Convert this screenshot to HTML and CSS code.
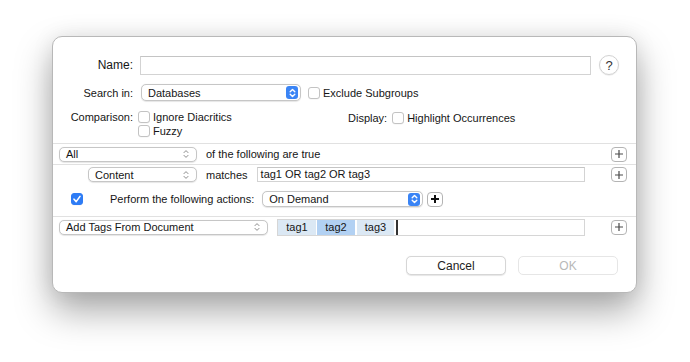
FILE: index.html
```html
<!DOCTYPE html>
<html>
<head>
<meta charset="utf-8">
<link rel="stylesheet" href="styles.css">
</head>
<body>
<div class="page">
  <div class="dialog">
    <div class="top">
      <div class="row row-name">
        <div class="label label-name">Name:</div>
        <div class="field field-name"></div>
        <div class="help">?</div>
      </div>
      <div class="row row-search">
        <div class="label">Search in:</div>
        <div class="popup popup-search"><span>Databases</span>
          <span class="blue-step"><svg width="7" height="10" viewBox="0 0 7 10"><polyline points="1.2,3.8 3.5,1.5 5.8,3.8" fill="none" stroke="#fff" stroke-width="1.4" stroke-linecap="round" stroke-linejoin="round"/><polyline points="1.2,6.2 3.5,8.5 5.8,6.2" fill="none" stroke="#fff" stroke-width="1.4" stroke-linecap="round" stroke-linejoin="round"/></svg></span>
        </div>
        <div class="check"></div>
        <div class="check-text">Exclude Subgroups</div>
      </div>
      <div class="row row-comp">
        <div class="label label-comp">Comparison:</div>
        <div class="comp-opts">
          <div class="opt"><div class="check"></div><span class="check-text">Ignore Diacritics</span></div>
          <div class="opt"><div class="check"></div><span class="check-text">Fuzzy</span></div>
        </div>
        <div class="display">
          <span class="display-label">Display:</span>
          <div class="check"></div>
          <span class="check-text">Highlight Occurrences</span>
        </div>
      </div>
    </div>
    <div class="divider"></div>
    <div class="rule rule-all">
      <div class="popup popup-all"><span>All</span>
        <svg class="step" width="6" height="10" viewBox="0 0 6 10"><polyline points="1,3.6 3,1.6 5,3.6" fill="none" stroke="#8a8a8a" stroke-width="1" stroke-linecap="round" stroke-linejoin="round"/><polyline points="1,6.4 3,8.4 5,6.4" fill="none" stroke="#8a8a8a" stroke-width="1" stroke-linecap="round" stroke-linejoin="round"/></svg>
      </div>
      <div class="rule-text">of the following are true</div>
      <div class="plus"><svg width="10" height="10" viewBox="0 0 10 10"><path d="M5 1V9M1 5H9" stroke="#4a4a4a" stroke-width="1.2"/></svg></div>
    </div>
    <div class="divider"></div>
    <div class="block">
      <div class="rule rule-content">
        <div class="popup popup-content"><span>Content</span>
          <svg class="step" width="6" height="10" viewBox="0 0 6 10"><polyline points="1,3.6 3,1.6 5,3.6" fill="none" stroke="#8a8a8a" stroke-width="1" stroke-linecap="round" stroke-linejoin="round"/><polyline points="1,6.4 3,8.4 5,6.4" fill="none" stroke="#8a8a8a" stroke-width="1" stroke-linecap="round" stroke-linejoin="round"/></svg>
        </div>
        <div class="rule-text">matches</div>
        <div class="field field-match">tag1 OR tag2 OR tag3</div>
        <div class="plus"><svg width="10" height="10" viewBox="0 0 10 10"><path d="M5 1V9M1 5H9" stroke="#4a4a4a" stroke-width="1.2"/></svg></div>
      </div>
      <div class="row row-perform">
        <div class="check checked"><svg width="10" height="10" viewBox="0 0 10 10"><polyline points="2,5.2 4.2,7.6 8,2.4" fill="none" stroke="#fff" stroke-width="1.6" stroke-linecap="round" stroke-linejoin="round"/></svg></div>
        <div class="perform-text">Perform the following actions:</div>
        <div class="popup popup-demand"><span>On Demand</span>
          <span class="blue-step"><svg width="7" height="10" viewBox="0 0 7 10"><polyline points="1.2,3.8 3.5,1.5 5.8,3.8" fill="none" stroke="#fff" stroke-width="1.4" stroke-linecap="round" stroke-linejoin="round"/><polyline points="1.2,6.2 3.5,8.5 5.8,6.2" fill="none" stroke="#fff" stroke-width="1.4" stroke-linecap="round" stroke-linejoin="round"/></svg></span>
        </div>
        <div class="plus plus-bold"><svg width="10" height="10" viewBox="0 0 10 10"><path d="M5 1V9M1 5H9" stroke="#111" stroke-width="2"/></svg></div>
      </div>
    </div>
    <div class="divider"></div>
    <div class="rule rule-tags">
      <div class="popup popup-tags"><span>Add Tags From Document</span>
        <svg class="step" width="6" height="10" viewBox="0 0 6 10"><polyline points="1,3.6 3,1.6 5,3.6" fill="none" stroke="#8a8a8a" stroke-width="1" stroke-linecap="round" stroke-linejoin="round"/><polyline points="1,6.4 3,8.4 5,6.4" fill="none" stroke="#8a8a8a" stroke-width="1" stroke-linecap="round" stroke-linejoin="round"/></svg>
      </div>
      <div class="field token-field">
        <span class="tag">tag1</span><span class="tag tag-sel">tag2</span><span class="tag tag-last">tag3</span><span class="caret"></span>
      </div>
      <div class="plus"><svg width="10" height="10" viewBox="0 0 10 10"><path d="M5 1V9M1 5H9" stroke="#4a4a4a" stroke-width="1.2"/></svg></div>
    </div>
    <div class="buttons">
      <div class="btn">Cancel</div>
      <div class="btn btn-disabled">OK</div>
    </div>
  </div>
</div>
</body>
</html>
```

FILE: styles.css
```css
html, body {
  margin: 0;
  padding: 0;
  background: #ffffff;
}
body {
  font-family: "Liberation Sans", Arial, Helvetica, sans-serif;
  font-size: 11px;
  color: #161616;
  min-height: 362px;
}
.page {
  padding: 36px 0 0 52px;
}
.dialog {
  width: 585px;
  box-sizing: border-box;
  border: 1px solid #b8b8b8;
  border-radius: 10px;
  background: #ffffff;
  box-shadow: 0 18px 36px rgba(0, 0, 0, 0.34), 0 0 22px rgba(0, 0, 0, 0.08);
  display: flex;
  flex-direction: column;
  padding-bottom: 17px;
}
.top {
  padding-top: 18px;
  padding-bottom: 5px;
}
.row {
  display: flex;
  align-items: center;
}
.label {
  width: 80px;
  text-align: right;
  flex: none;
}
.label-name {
  font-size: 12px;
}
.row-name {
  height: 20px;
}
.field {
  box-sizing: border-box;
  border: 1px solid #d3d3d3;
  border-top-color: #c4c4c4;
  background: #fff;
}
.field-name {
  margin-left: 7px;
  width: 451px;
  height: 19px;
}
.help {
  margin-left: 8px;
  width: 20px;
  height: 20px;
  box-sizing: border-box;
  border-radius: 50%;
  border: 1px solid #d2d2d2;
  box-shadow: 0 0.5px 1px rgba(0,0,0,0.12);
  display: flex;
  align-items: center;
  justify-content: center;
  font-size: 13px;
  color: #333;
}
.row-search {
  margin-top: 9px;
  height: 17px;
}
.popup {
  box-sizing: border-box;
  border: 1px solid #c6c6c6;
  border-radius: 5px;
  background: #fff;
  box-shadow: 0 0.5px 1px rgba(0,0,0,0.10);
  display: flex;
  align-items: center;
  justify-content: space-between;
  padding-left: 6px;
  padding-right: 2px;
  flex: none;
}
.popup .step {
  margin-right: 5px;
}
.blue-step {
  width: 12px;
  height: 13px;
  border-radius: 3px;
  background: #3a84f5;
  display: flex;
  align-items: center;
  justify-content: center;
}
.popup-search {
  margin-left: 8px;
  width: 160px;
  height: 17px;
}
.check {
  width: 12px;
  height: 12px;
  box-sizing: border-box;
  border: 1px solid #c3c3c3;
  border-radius: 3px;
  background: #fff;
  box-shadow: 0 0.5px 0.5px rgba(0,0,0,0.06);
  flex: none;
}
.row-search .check {
  margin-left: 7px;
}
.check-text {
  margin-left: 3px;
}
.row-comp {
  margin-top: 9px;
  align-items: flex-start;
}
.label-comp {
  line-height: 14px;
}
.comp-opts {
  margin-left: 5px;
  width: 210px;
  display: flex;
  flex-direction: column;
}
.opt {
  height: 14px;
  display: flex;
  align-items: center;
}
.display {
  height: 14px;
  margin-top: 1px;
  display: flex;
  align-items: center;
}
.display-label {
  margin-right: 5px;
}
.divider {
  height: 1px;
  background: #e1e1e1;
}
.rule {
  display: flex;
  align-items: center;
  padding-left: 6px;
  padding-right: 9px;
}
.rule-all {
  height: 20px;
}
.popup-all {
  width: 138px;
  height: 15px;
}
.rule-text {
  margin-left: 9px;
}
.plus {
  margin-left: auto;
  width: 16px;
  height: 15px;
  box-sizing: border-box;
  border: 1px solid #b4b4b4;
  border-radius: 4px;
  background: #fff;
  display: flex;
  align-items: center;
  justify-content: center;
  flex: none;
}
.block {
  height: 51px;
}
.rule-content {
  height: 19px;
}
.popup-content {
  margin-left: 29px;
  width: 109px;
  height: 15px;
}
.field-match {
  margin-left: 9px;
  width: 328px;
  height: 15px;
  padding-left: 3px;
  line-height: 13px;
}
.row-perform {
  margin-top: 6px;
  height: 18px;
  padding-left: 18px;
}
.check.checked {
  background: #2e7cf5;
  border-color: #2e7cf5;
  display: flex;
  align-items: center;
  justify-content: center;
}
.perform-text {
  margin-left: 27px;
}
.popup-demand {
  margin-left: 8px;
  width: 161px;
  height: 16px;
}
.plus-bold {
  margin-left: 4px;
}
.rule-tags {
  height: 20px;
}
.popup-tags {
  width: 209px;
  height: 15px;
}
.token-field {
  margin-left: 9px;
  width: 308px;
  height: 17px;
  display: flex;
  align-items: stretch;
  border-color: #d6d6d6;
}
.tag {
  width: 38px;
  display: flex;
  align-items: center;
  justify-content: center;
  background: #dbe8f4;
  margin-right: 1px;
}
.tag-sel {
  background: #b2d1f3;
  margin-right: 2px;
}
.tag-last {
  width: 37px;
  margin-right: 2px;
}
.caret {
  width: 1.5px;
  background: #333;
  margin: 0;
}
.buttons {
  display: flex;
  justify-content: flex-end;
  padding-right: 18px;
  margin-top: 19px;
  gap: 12px;
}
.btn {
  width: 100px;
  height: 19px;
  box-sizing: border-box;
  border: 1px solid #d6d6d6;
  border-radius: 5px;
  background: #fff;
  box-shadow: 0 0.5px 1px rgba(0,0,0,0.10);
  display: flex;
  align-items: center;
  justify-content: center;
  font-size: 12px;
  color: #1e1e1e;
}
.btn-disabled {
  color: #b8b8b8;
  border-color: #e6e6e6;
  box-shadow: none;
}
```
